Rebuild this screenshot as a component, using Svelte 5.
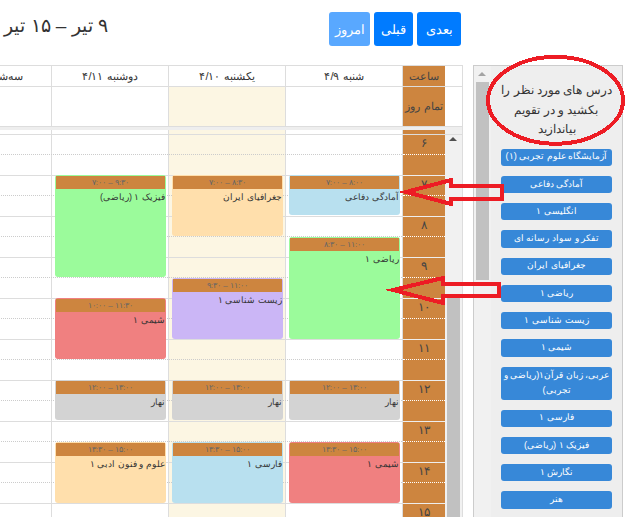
<script>
  const days = [
    { label: 'شنبه ۴/۹' },
    { label: 'یکشنبه ۴/۱۰', today: true },
    { label: 'دوشنبه ۴/۱۱' },
    { label: 'سه‌شنبه ۴/۱۲' }
  ];
  const hours = [6, 7, 8, 9, 10, 11, 12, 13, 14, 15].map((h) => ({
    n: h,
    fa: String(h).replace(/\d/g, (d) => '۰۱۲۳۴۵۶۷۸۹'[d])
  }));
  const HOUR = 41;
  const fa = (t) => t.replace(/\d/g, (d) => '۰۱۲۳۴۵۶۷۸۹'[d]);
  const fmt = (h) => fa(`${Math.floor(h)}:${h % 1 ? '30' : '00'}`);
  const events = [
    [{ s: 7, e: 8, t: 'آمادگی دفاعی', c: 'blue' }, { s: 8.5, e: 11, t: 'ریاضی ۱', c: 'green' }, { s: 12, e: 13, t: 'نهار', c: 'gray' }, { s: 13.5, e: 15, t: 'شیمی ۱', c: 'red' }],
    [{ s: 7, e: 8.5, t: 'جغرافیای ایران', c: 'wheat' }, { s: 9.5, e: 11, t: 'زیست شناسی ۱', c: 'purple' }, { s: 12, e: 13, t: 'نهار', c: 'gray' }, { s: 13.5, e: 15, t: 'فارسی ۱', c: 'blue' }],
    [{ s: 7, e: 9.5, t: 'فیزیک ۱ (ریاضی)', c: 'green' }, { s: 10, e: 11.5, t: 'شیمی ۱', c: 'red' }, { s: 12, e: 13, t: 'نهار', c: 'gray' }, { s: 13.5, e: 15, t: 'علوم و فنون ادبی ۱', c: 'wheat' }],
    []
  ];
  const lessons = ['آزمایشگاه علوم تجربی (۱)', 'آمادگی دفاعی', 'انگلیسی ۱', 'تفکر و سواد رسانه ای', 'جغرافیای ایران', 'ریاضی ۱', 'زیست شناسی ۱', 'شیمی ۱', 'عربی، زبان قرآن۱(ریاضی و تجربی)', 'فارسی ۱', 'فیزیک ۱ (ریاضی)', 'نگارش ۱', 'هنر'];
</script>

<div class="page" dir="rtl">
  <aside class="side">
    <div class="list">
      <p class="hint">درس های مورد نظر را بکشید و در تقویم بیاندازید</p>
      {#each lessons as l}<div class="lesson">{l}</div>{/each}
    </div>
    <div class="sbar"><span class="up dim"></span><span class="sthumb"></span></div>
  </aside>

  <div class="main">
    <div class="toolbar">
      <div class="btns">
        <button class="btn next">بعدی</button>
        <button class="btn prev">قبلی</button>
        <button class="btn off">امروز</button>
      </div>
      <h2 class="title">۹ تیر – ۱۵ تیر</h2>
    </div>

    <div class="cal">
      <div class="head row">
        <div class="gutter"></div>
        <div class="timecell">ساعت</div>
        {#each days as d}<div class="day">{d.label}</div>{/each}
      </div>
      <div class="allday row">
        <div class="gutter"></div>
        <div class="timecell">تمام روز</div>
        {#each days as d}<div class="day" class:today={d.today}></div>{/each}
      </div>
      <div class="divider"><div class="gutter"></div></div>
      <div class="gap row">
        <div class="gutter track"></div>
        <div class="timecell"></div>
        {#each days as d}<div class="day" class:today={d.today}></div>{/each}
      </div>
      <div class="body row">
        <div class="gutter track">
          <span class="up"></span>
          <span class="thumb"></span>
        </div>
        <div class="times">
          {#each hours as h}
            <div class="tslot"><div class="thalf">{h.fa}</div></div>
          {/each}
        </div>
        <div class="grid">
          <div class="cols">
            {#each days as d}<div class="day" class:today={d.today}></div>{/each}
          </div>
          <div class="lines">
            {#each hours as h}<div class="slot"><div class="half"></div></div>{/each}
          </div>
          <div class="cols over">
            {#each days as d, i}
              <div class="evcol">
                {#each events[i] as e}
                  <div class="event {e.c}" style="top:{(e.s - 6) * HOUR - 1}px;height:{Math.floor((e.e - e.s) * HOUR - 0.5)}px">
                    <div class="evtime" dir="ltr">{fmt(e.s)} – {fmt(e.e)}</div>
                    <div class="evtitle">{e.t}</div>
                  </div>
                {/each}
              </div>
            {/each}
          </div>
        </div>
      </div>
    </div>
  </div>

  <svg class="marks" width="639" height="517" viewBox="0 0 639 517" shape-rendering="crispEdges">
    <ellipse cx="555.5" cy="100.3" rx="67.5" ry="43.4" />
    <polygon points="406,192 451,180 451,186 502,186 502,199 451,199 451,204" />
    <polygon points="393,290 443,278 443,283.5 498.5,283.5 498.5,296 443,296 443,303" />
  </svg>
</div>

<style>
  :global(body) {
    margin: 0;
    background: #fff;
  }
  .page {
    position: relative;
    display: flex;
    width: 639px;
    height: 517px;
    overflow: hidden;
    padding-right: 16px;
    box-sizing: border-box;
    gap: 10px;
    font-family: "Liberation Sans", sans-serif;
    color: #333;
  }
  .main {
    flex: 0 0 auto;
    width: 529px;
  }
  .toolbar {
    display: flex;
    align-items: flex-start;
    height: 65px;
    padding-right: 2px;
    box-sizing: border-box;
  }
  .btns {
    display: flex;
    gap: 4px;
    margin-top: 12px;
    margin-left: 221px;
  }
  .btn {
    height: 34px;
    padding: 0;
    border: 0;
    border-radius: 3px;
    background: #007bff;
    color: #fff;
    font: 12.5px "Liberation Sans", sans-serif;
  }
  .next {
    width: 44px;
  }
  .prev {
    width: 39px;
  }
  .btn.off {
    width: 41px;
    background: #59a8ff;
  }
  .title {
    margin: 14px 0 0;
    font-size: 19px;
    font-weight: 400;
    white-space: nowrap;
    line-height: 24px;
  }
  .cal {
    width: 529px;
    border-top: 1px solid #ddd;
  }
  .row {
    display: flex;
    box-sizing: border-box;
  }
  .gutter {
    flex: 0 0 18px;
    box-sizing: border-box;
    border-right: 1px solid #ddd;
    position: relative;
  }
  .track {
    background: #f1f1f1;
  }
  .timecell {
    flex: 0 0 43px;
    box-sizing: border-box;
    background: #cd853f;
    color: #444;
    display: flex;
    align-items: center;
    justify-content: center;
    font-size: 11px;
    white-space: nowrap;
    border-left: 1px solid #ddd;
  }
  .day {
    flex: 0 0 117px;
    box-sizing: border-box;
    border-left: 1px solid #ddd;
    font-size: 11.2px;
    white-space: nowrap;
    display: flex;
    align-items: center;
    justify-content: center;
  }
  .today {
    background: #fcf6e3;
  }
  .head {
    height: 21px;
    border-bottom: 1px solid #ddd;
  }
  .allday {
    height: 40px;
    border-bottom: 1px solid #ddd;
  }
  .divider {
    display: flex;
    height: 3px;
    background: #eee;
  }
  .divider .gutter {
    background: #eee;
  }
  .gap {
    height: 5px;
    border-bottom: 1px solid #ddd;
  }
  .body {
    height: 410px;
  }
  .times {
    flex: 0 0 43px;
    box-sizing: border-box;
    background: #cd853f;
    border-left: 1px solid #ddd;
  }
  .tslot {
    height: 41px;
    box-sizing: border-box;
    border-bottom: 1px solid #eee;
  }
  .thalf {
    height: 20px;
    box-sizing: border-box;
    border-bottom: 1px dotted #fff;
    text-align: center;
    font-size: 12px;
    line-height: 16px;
    color: #444;
  }
  .grid {
    position: relative;
    flex: 0 0 468px;
  }
  .cols {
    display: flex;
    height: 100%;
  }
  .cols.over {
    position: absolute;
    inset: 0;
  }
  .lines {
    position: absolute;
    inset: 0;
  }
  .slot {
    height: 41px;
    box-sizing: border-box;
    border-bottom: 1px solid #ddd;
  }
  .half {
    height: 20px;
    box-sizing: border-box;
    border-bottom: 1px dotted #ccc;
  }
  .evcol {
    position: relative;
    flex: 0 0 117px;
  }
  .event {
    position: absolute;
    right: 2px;
    left: 4px;
    box-sizing: border-box;
    border-radius: 3px;
    padding: 1px;
    overflow: hidden;
    color: #333;
  }
  .evtime {
    height: 13px;
    background: #cd853f;
    color: #666;
    font-size: 8px;
    letter-spacing: 0.6px;
    line-height: 13px;
    text-align: center;
  }
  .evtitle {
    font-size: 9px;
    line-height: 16px;
  }
  .blue { background: #b8e0ef; }
  .green { background: #9bfb9b; }
  .gray { background: #d3d3d3; }
  .red { background: #f08080; }
  .wheat { background: #ffdfac; }
  .purple { background: #cbb6f6; }
  .up {
    position: absolute;
    top: 2px;
    left: 4px;
    width: 0;
    height: 0;
    border: 4px solid transparent;
    border-top: 0;
    border-bottom: 4px solid #505050;
  }
  .up.dim {
    top: 6px;
    border-bottom-color: #a3a3a3;
  }
  .thumb {
    position: absolute;
    top: 161px;
    left: 2px;
    width: 13px;
    bottom: 0;
    background: #c1c1c1;
  }
  .side {
    flex: 0 0 150px;
    box-sizing: border-box;
    margin-top: 65px;
    height: 460px;
    border: 1px solid #ccc;
    background: #eee;
    display: flex;
  }
  .list {
    flex: 1;
    display: flex;
    flex-direction: column;
    align-items: center;
    padding-top: 15px;
    min-width: 0;
  }
  .hint {
    margin: 0 0 9px;
    font-size: 12px;
    line-height: 19.5px;
    text-align: center;
    padding: 0 8px;
  }
  .lesson {
    width: 111px;
    box-sizing: border-box;
    background: #3788d8;
    color: #fff;
    border-radius: 3px;
    font-size: 9.2px;
    line-height: 15.6px;
    padding: 0.85px 1px;
    margin-bottom: 10px;
    text-align: center;
  }
  .sbar {
    flex: 0 0 17px;
    position: relative;
    background: #f1f1f1;
  }
  .sthumb {
    position: absolute;
    top: 16px;
    left: 2px;
    width: 13px;
    height: 198px;
    background: #c1c1c1;
  }
  .marks {
    position: absolute;
    top: 0;
    left: 0;
    pointer-events: none;
  }
  .marks ellipse,
  .marks polygon {
    fill: none;
    stroke: #ed1c24;
    stroke-width: 4;
    stroke-miterlimit: 10;
  }
</style>
